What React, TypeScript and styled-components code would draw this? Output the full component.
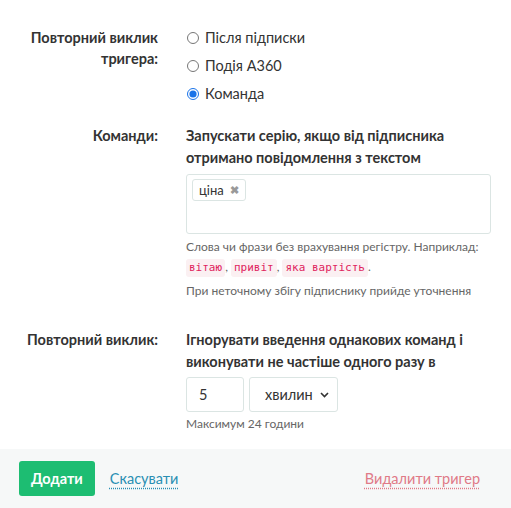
import styled, { createGlobalStyle } from "styled-components";

const Global = createGlobalStyle`
  html, body {
    margin: 0;
    padding: 0;
    background: #fff;
    font-family: Lato, "Open Sans", "Noto Sans", sans-serif;
    color: #333;
  }
  * { box-sizing: border-box; }
`;

const Form = styled.div`
  width: 511px;
  padding-top: 27px;
`;

const Row = styled.div<{ $mb?: number }>`
  display: grid;
  grid-template-columns: 140px 305px;
  column-gap: 28px;
  padding: 0 20px 0 18px;
  margin-bottom: ${p => p.$mb ?? 0}px;
`;

const Label = styled.div`
  text-align: right;
  font-size: 14.5px;
  font-weight: 700;
  line-height: 21px;
  color: #333;
`;

const Radios = styled.div`
  display: flex;
  flex-direction: column;
  gap: 7px;
`;

const RadioLabel = styled.label`
  display: flex;
  align-items: center;
  font-size: 14.5px;
  line-height: 21px;
  color: #333;
  input {
    margin: 0 6px 0 1px;
    width: 12px;
    height: 12px;
    accent-color: #1a73e8;
  }
`;

const Heading = styled.div<{ $mb: number }>`
  font-size: 14.5px;
  font-weight: 700;
  line-height: 22px;
  color: #333;
  margin-bottom: ${p => p.$mb}px;
`;

const TagBox = styled.div`
  height: 60px;
  border: 1px solid #dbe5e3;
  border-radius: 3px;
  padding: 4px 5px;
  display: flex;
  align-items: flex-start;
`;

const Tag = styled.span`
  display: inline-flex;
  align-items: center;
  gap: 6px;
  height: 22px;
  padding: 0 6px;
  border: 1px solid #dbe5e3;
  border-radius: 3px;
  font-size: 13px;
  color: #333;
  background: #fff;
`;

const Cross = styled.span`
  color: #999;
  font-size: 11px;
  font-weight: 700;
`;

const Help = styled.div<{ $mt?: number }>`
  font-size: 12px;
  line-height: 20px;
  color: #666;
  margin-top: ${p => p.$mt ?? 0}px;
`;

const Code = styled.code`
  display: inline-block;
  line-height: 16px;
  font-family: "DejaVu Sans Mono", "Liberation Mono", monospace;
  font-size: 11px;
  color: #e0245e;
  background: #fbf0f2;
  border-radius: 3px;
  padding: 1px 3px;
`;

const Inline = styled.div`
  display: flex;
  gap: 5px;
  margin-bottom: 2px;
`;

const NumberInput = styled.input`
  width: 58px;
  height: 35px;
  border: 1px solid #dbe5e3;
  border-radius: 3px;
  padding: 0 12px;
  font-family: inherit;
  font-size: 14.5px;
  color: #333;
  outline: none;
`;

const SelectBox = styled.div`
  width: 89px;
  height: 35px;
  border: 1px solid #dbe5e3;
  border-radius: 3px;
  display: flex;
  align-items: center;
  justify-content: space-between;
  padding: 0 8px 0 15px;
  font-size: 14.5px;
  color: #333;
`;

const Footer = styled.div`
  margin-top: 15px;
  background: #f6f8f8;
  height: 59px;
  display: flex;
  align-items: center;
  padding: 0 31px 0 19px;
`;

const PrimaryButton = styled.button`
  height: 35px;
  padding: 0 12px;
  border: none;
  border-radius: 3px;
  background: #1dbd72;
  color: #fff;
  font-family: inherit;
  font-size: 14.5px;
  font-weight: 700;
`;

const LinkButton = styled.a<{ $color: string }>`
  font-size: 14.5px;
  color: ${p => p.$color};
  text-decoration: underline dotted;
  text-underline-offset: 4px;
  cursor: pointer;
`;

const Spacer = styled.div`
  flex: 1;
`;

export default function App() {
  return (
    <>
      <Global />
      <Form>
        <Row $mb={21}>
          <Label>Повторний виклик тригера:</Label>
          <Radios>
            <RadioLabel>
              <input type="radio" name="t" /> Після підписки
            </RadioLabel>
            <RadioLabel>
              <input type="radio" name="t" /> Подія A360
            </RadioLabel>
            <RadioLabel>
              <input type="radio" name="t" defaultChecked /> Команда
            </RadioLabel>
          </Radios>
        </Row>
        <Row $mb={28}>
          <Label>Команди:</Label>
          <div>
            <Heading $mb={5}>Запускати серію, якщо від підписника отримано повідомлення з текстом</Heading>
            <TagBox>
              <Tag>
                ціна <Cross>✖</Cross>
              </Tag>
            </TagBox>
            <Help $mt={3}>Слова чи фрази без врахування регістру. Наприклад:</Help>
            <Help>
              <Code>вітаю</Code>, <Code>привіт</Code>, <Code>яка вартість</Code>.
            </Help>
            <Help $mt={4}>При неточному збігу підписнику прийде уточнення</Help>
          </div>
        </Row>
        <Row>
          <Label>Повторний виклик:</Label>
          <div>
            <Heading $mb={4}>Ігнорувати введення однакових команд і виконувати не частіше одного разу в</Heading>
            <Inline>
              <NumberInput defaultValue="5" />
              <SelectBox>
                хвилин
                <svg width="9" height="6" viewBox="0 0 9 6">
                  <path d="M1 1l3.5 3.5L8 1" fill="none" stroke="#333" strokeWidth="1.6" />
                </svg>
              </SelectBox>
            </Inline>
            <Help>Максимум 24 години</Help>
          </div>
        </Row>
        <Footer>
          <PrimaryButton>Додати</PrimaryButton>
          <LinkButton $color="#2a8fb3" style={{ marginLeft: 15 }}>Скасувати</LinkButton>
          <Spacer />
          <LinkButton $color="#e07a87">Видалити тригер</LinkButton>
        </Footer>
      </Form>
    </>
  );
}
